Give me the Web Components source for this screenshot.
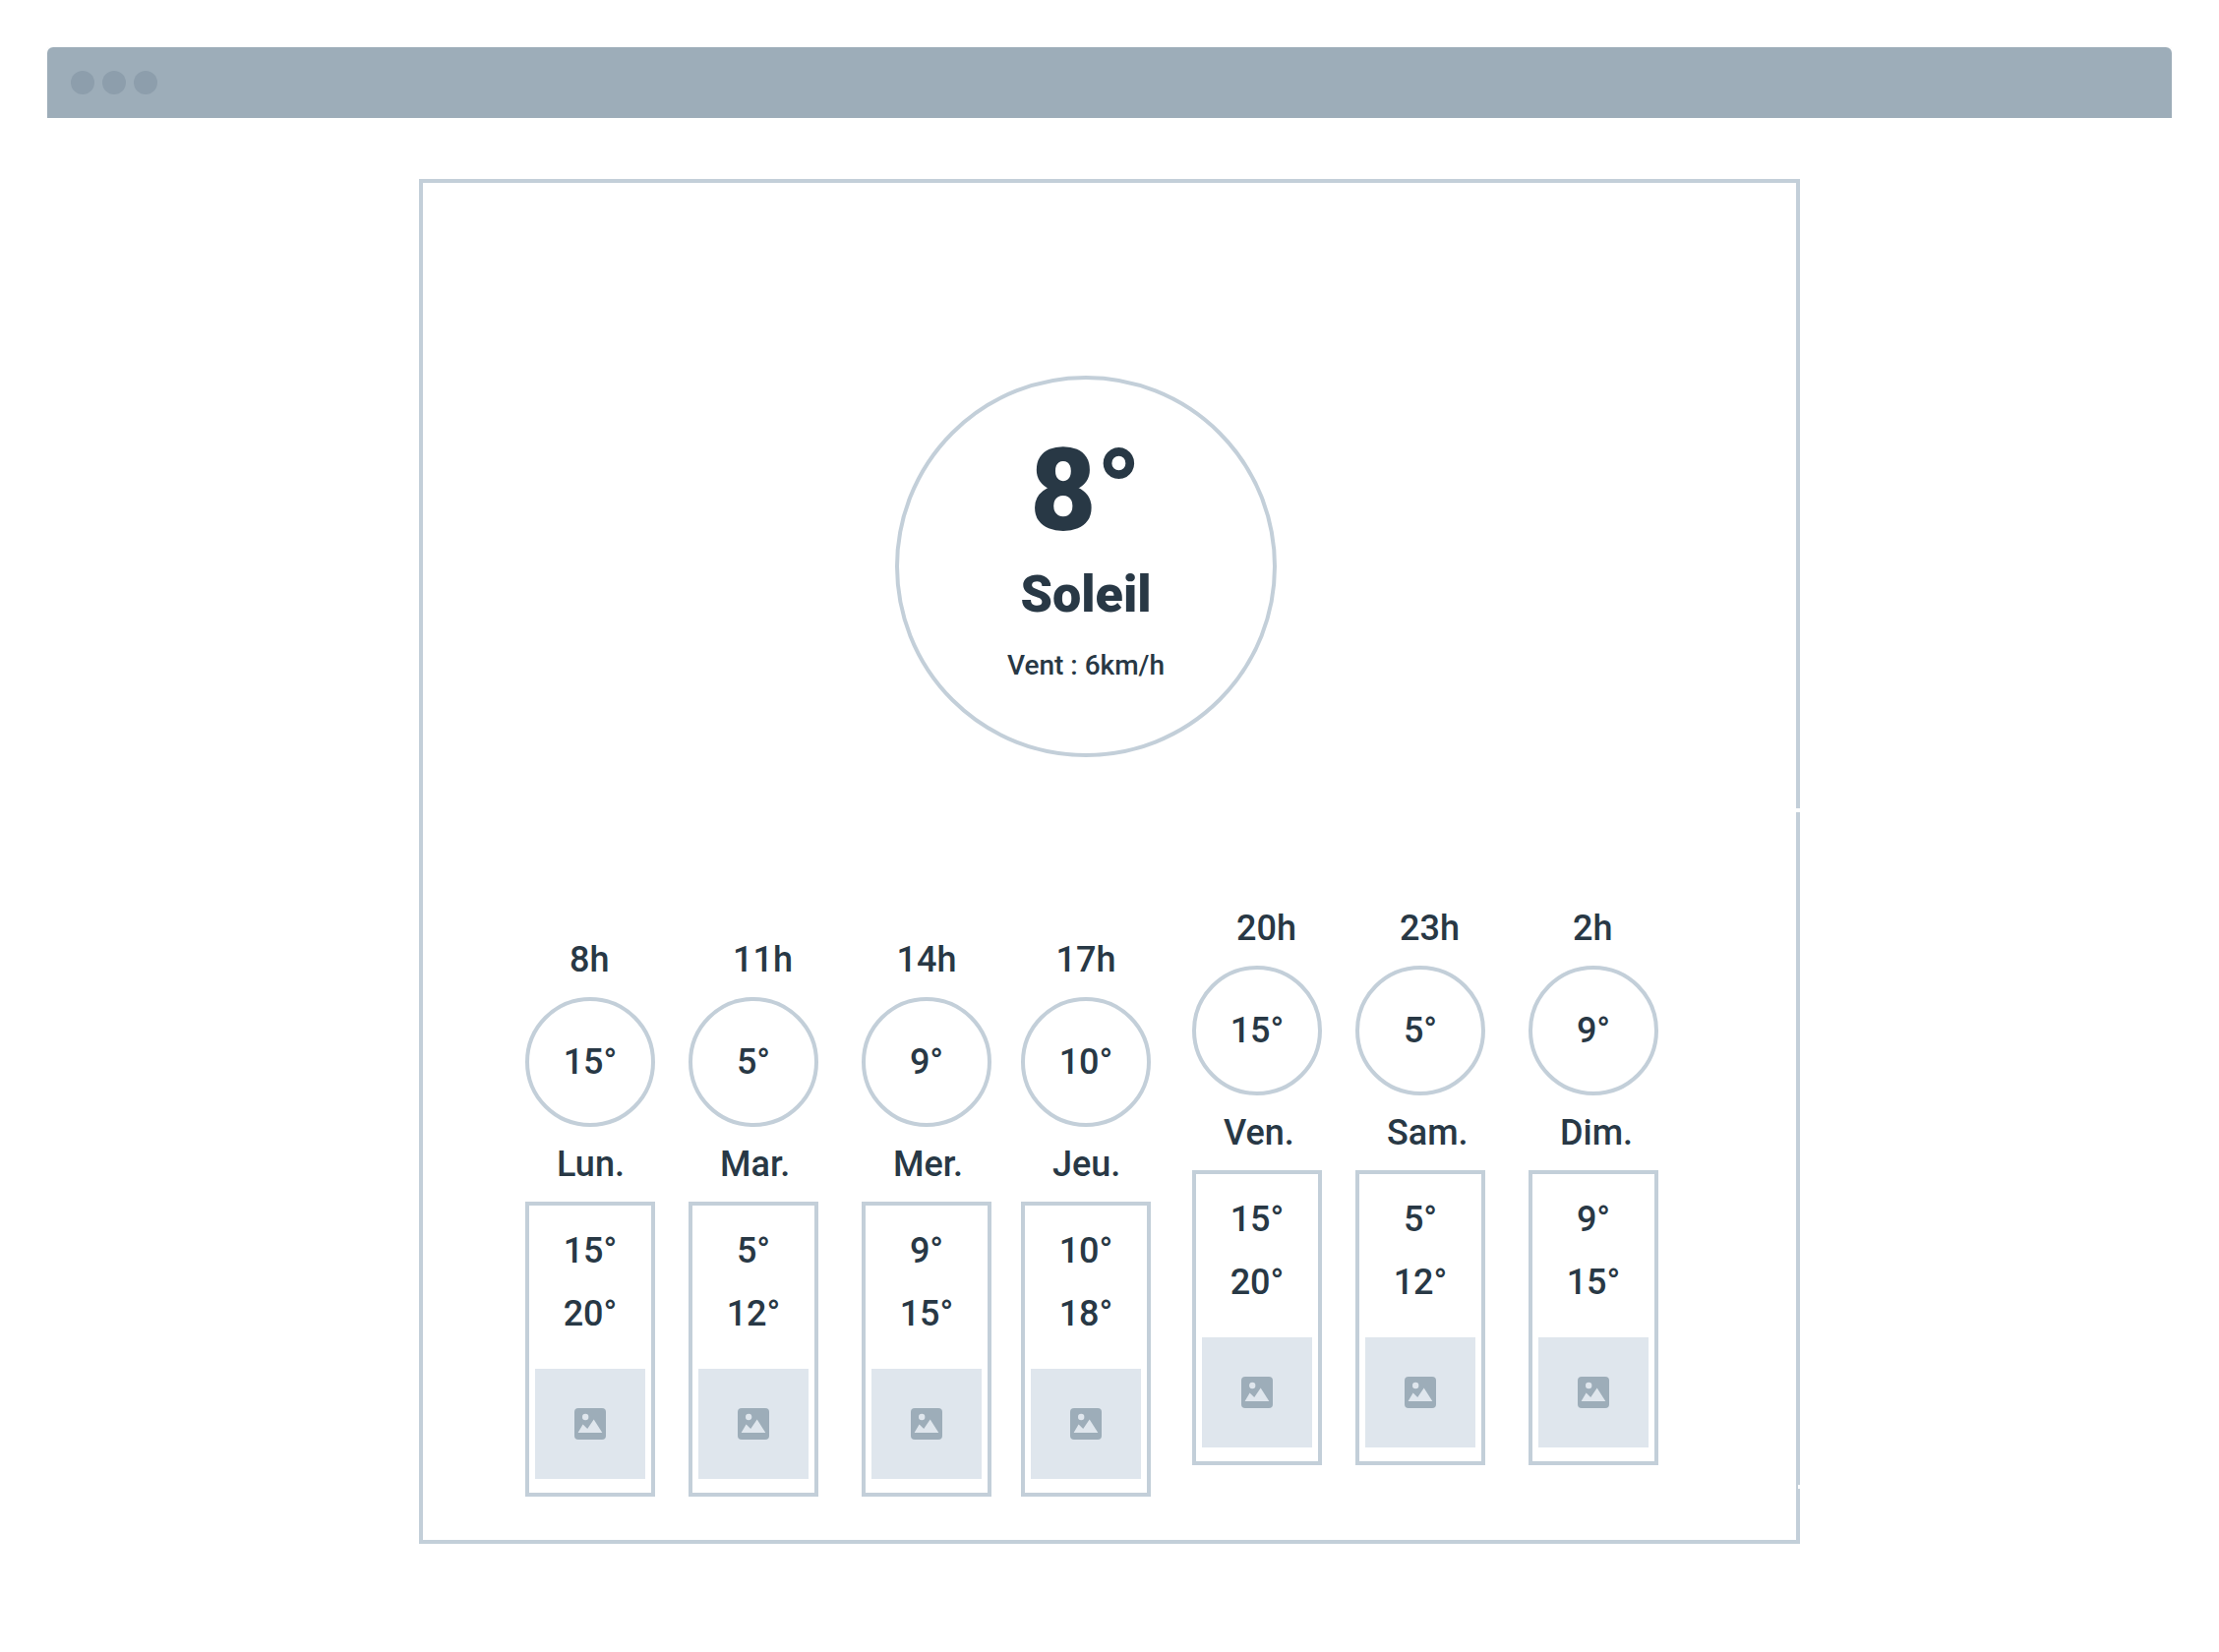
<!DOCTYPE html>
<html lang="fr">
<head>
<meta charset="utf-8">
<title>Météo</title>
<style>
  body {
    margin: 48px;
    background: #fff;
    color: #283845;
    font-family: Roboto, "Liberation Sans", sans-serif;
    --line: #c3cfd9;
    --bar: #9dadb9;
    --dot: #8d9eac;
    --fill: #dfe6ed;
  }
</style>
</head>
<body>
<app-window>
  <weather-board>
    <current-weather slot="now" temp="8°" sky="Soleil" wind="Vent : 6km/h"></current-weather>
    <forecast-column hour="8h" now="15°" day="Lun." low="15°" high="20°"></forecast-column>
    <forecast-column hour="11h" now="5°" day="Mar." low="5°" high="12°"></forecast-column>
    <forecast-column centered hour="14h" now="9°" day="Mer." low="9°" high="15°"></forecast-column>
    <forecast-column centered hour="17h" now="10°" day="Jeu." low="10°" high="18°"></forecast-column>
    <forecast-column raised hour="20h" now="15°" day="Ven." low="15°" high="20°"></forecast-column>
    <forecast-column raised hour="23h" now="5°" day="Sam." low="5°" high="12°"></forecast-column>
    <forecast-column raised hour="2h" now="9°" day="Dim." low="9°" high="15°"></forecast-column>
  </weather-board>
</app-window>

<script>
  class AppWindow extends HTMLElement {
    constructor() {
      super();
      this.attachShadow({ mode: "open" }).innerHTML = `
        <style>
          :host { display: block; }
          .frame { border-radius: 6px 6px 0 0; background: #fff; box-shadow: 0 4px 20px rgba(0, 0, 0, 0.08); }
          header { display: flex; align-items: center; gap: 8px; height: 72px; padding: 0 24px; box-sizing: border-box;
                   background: var(--bar); border-radius: 6px 6px 0 0; }
          i { width: 24px; height: 24px; border-radius: 50%; background: var(--dot); }
          main { display: flex; justify-content: center; padding: 62px 0; }
        </style>
        <div class="frame">
          <header><i></i><i></i><i></i></header>
          <main><slot></slot></main>
        </div>`;
    }
  }

  class WeatherBoard extends HTMLElement {
    constructor() {
      super();
      this.attachShadow({ mode: "open" }).innerHTML = `
        <style>
          :host { display: block; position: relative; box-sizing: border-box; width: 65%; min-width: 1200px;
                  padding: 196px 0 44px; border: 4px solid var(--line); }
          .now { display: grid; grid-template-columns: 480fr 388px 528fr; margin-bottom: 150px; }
          .now slot { display: block; grid-column: 2; }
          .days { display: grid; align-items: start;
                  grid-template-columns: 104fr 132px 34fr 132px 44fr 132px 30fr 132px 42fr 132px 34fr 132px 44fr 132px 140fr; }
          .days slot { display: contents; }
          ::slotted(forecast-column) { grid-row: 1; }
          ::slotted(:nth-child(2)) { grid-column: 2; }
          ::slotted(:nth-child(3)) { grid-column: 4; }
          ::slotted(:nth-child(4)) { grid-column: 6; }
          ::slotted(:nth-child(5)) { grid-column: 8; }
          ::slotted(:nth-child(6)) { grid-column: 10; }
          ::slotted(:nth-child(7)) { grid-column: 12; }
          ::slotted(:nth-child(8)) { grid-column: 14; }
          .notch { position: absolute; right: -4px; height: 4px; width: 4px; background: #fff; }
          .upper { top: 636px; }
          .lower { top: 1324px; width: 2px; }
        </style>
        <section class="now"><slot name="now"></slot></section>
        <section class="days"><slot></slot></section>
        <span class="notch upper"></span><span class="notch lower"></span>`;
    }
  }

  class CurrentWeather extends HTMLElement {
    connectedCallback() {
      this.attachShadow({ mode: "open" }).innerHTML = `
        <style>
          :host { display: flex; flex-direction: column; align-items: center; box-sizing: border-box;
                  width: 388px; height: 388px; padding-top: 57px; border: 4px solid var(--line); border-radius: 50%; }
          h1, h2, p { margin: 0; white-space: nowrap; }
          h1 { font-size: 116px; line-height: 112px; font-weight: 900; }
          h2 { margin-top: 18px; font-size: 52px; line-height: 64px; font-weight: 900; }
          p { margin-top: 22px; font-size: 28px; line-height: 36px; font-weight: 500; }
        </style>
        <h1>${this.getAttribute("temp")}</h1>
        <h2>${this.getAttribute("sky")}</h2>
        <p>${this.getAttribute("wind")}</p>`;
    }
  }

  class ImagePlaceholder extends HTMLElement {
    constructor() {
      super();
      this.attachShadow({ mode: "open" }).innerHTML = `
        <style>
          :host { display: flex; align-items: center; justify-content: center; height: 112px; background: var(--fill); }
          svg { display: block; }
          rect { fill: var(--bar); }
          circle, path { fill: var(--fill); }
        </style>
        <svg width="32" height="32" viewBox="0 0 32 32" aria-hidden="true">
          <rect width="32" height="32" rx="4"/>
          <circle cx="11.2" cy="9" r="3.2"/>
          <path d="M3.6 25 8.6 16.6 13.2 21 19.7 11.6 28.3 25Z"/>
        </svg>`;
    }
  }

  class ForecastColumn extends HTMLElement {
    connectedCallback() {
      const a = (name) => this.getAttribute(name);
      this.attachShadow({ mode: "open" }).innerHTML = `
        <style>
          :host { display: flex; flex-direction: column; gap: 14px; margin-top: 32px;
                  font-size: 36px; line-height: 48px; font-weight: 500; }
          :host([raised]) { margin-top: 0; }
          .hour { padding-left: 45px; }
          :host([centered]) .hour { padding-left: 0; text-align: center; }
          .day { padding-left: 32px; white-space: nowrap; }
          .round { display: flex; align-items: center; justify-content: center; box-sizing: border-box;
                   height: 132px; border: 4px solid var(--line); border-radius: 50%; }
          .card { display: flex; flex-direction: column; gap: 16px; padding: 22px 6px 14px;
                  border: 4px solid var(--line); text-align: center; }
          image-placeholder { margin-top: 16px; }
        </style>
        <div class="hour">${a("hour")}</div>
        <div class="round">${a("now")}</div>
        <div class="day">${a("day")}</div>
        <div class="card">
          <div>${a("low")}</div>
          <div>${a("high")}</div>
          <image-placeholder></image-placeholder>
        </div>`;
    }
  }

  customElements.define("app-window", AppWindow);
  customElements.define("weather-board", WeatherBoard);
  customElements.define("current-weather", CurrentWeather);
  customElements.define("image-placeholder", ImagePlaceholder);
  customElements.define("forecast-column", ForecastColumn);
</script>
</body>
</html>
